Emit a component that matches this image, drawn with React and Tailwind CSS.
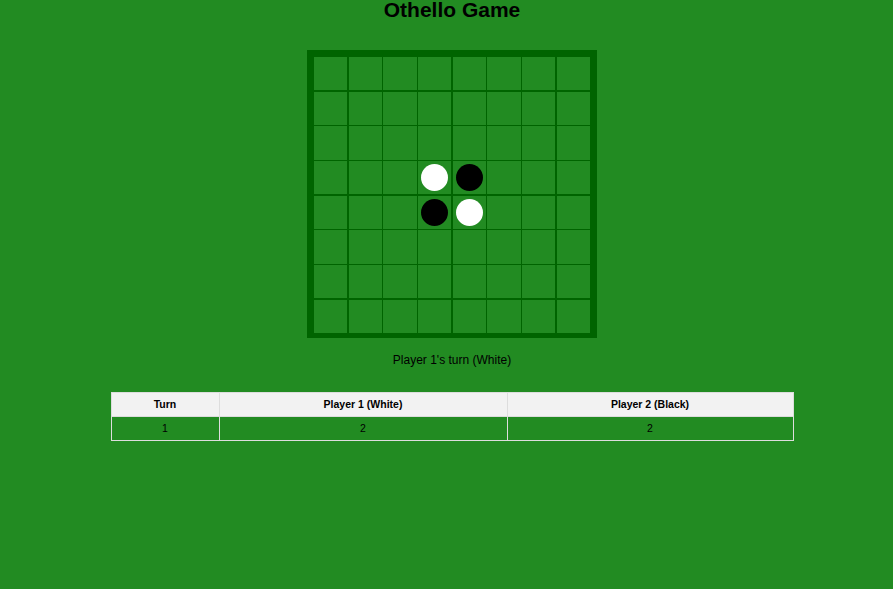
import React from 'react'

const initialBoard = () => {
  const b = Array.from({ length: 8 }, () => Array(8).fill(null))
  b[3][3] = 'white'
  b[3][4] = 'black'
  b[4][3] = 'black'
  b[4][4] = 'white'
  return b
}

const Cell = ({ piece }) => (
  <div className="bg-[#228B22] h-[33.19px] flex items-center justify-center">
    {piece && (
      <div
        className={`w-[27px] h-[27px] rounded-full ${piece === 'white' ? 'bg-white' : 'bg-black'}`}
      ></div>
    )}
  </div>
)

export default function App() {
  const board = initialBoard()

  return (
    <div
      className="min-h-[589px] w-full bg-[#228B22] pl-[11px] text-black overflow-hidden"
      style={{ fontFamily: '"Liberation Sans", Arial, sans-serif' }}
    >
      <h1 className="text-[21px] font-bold leading-[19px] text-center">Othello Game</h1>

      <div className="flex justify-center mt-[31px]">
        <div className="w-[290px] bg-[#006400] pt-[7px] px-[7px] pb-[5px]">
          <div className="grid grid-cols-8 gap-[1.5px]">
            {board.map((row, r) =>
              row.map((piece, c) => <Cell key={`${r}-${c}`} piece={piece} />)
            )}
          </div>
        </div>
      </div>

      <p className="text-[12px] leading-[14px] text-center mt-[15px]">Player 1's turn (White)</p>

      <div className="flex justify-center mt-[25px]">
        <table className="w-[683px] border-collapse text-[10.5px] text-center">
          <thead>
            <tr className="bg-[#f2f2f2] h-[24px]">
              <th className="w-[108px] border border-[#dddddd] font-bold">Turn</th>
              <th className="w-[288px] border border-[#dddddd] font-bold">Player 1 (White)</th>
              <th className="border border-[#dddddd] font-bold">Player 2 (Black)</th>
            </tr>
          </thead>
          <tbody>
            <tr className="h-[24px]">
              <td className="border border-[#dddddd]">1</td>
              <td className="border border-[#dddddd]">2</td>
              <td className="border border-[#dddddd]">2</td>
            </tr>
          </tbody>
        </table>
      </div>
    </div>
  )
}
